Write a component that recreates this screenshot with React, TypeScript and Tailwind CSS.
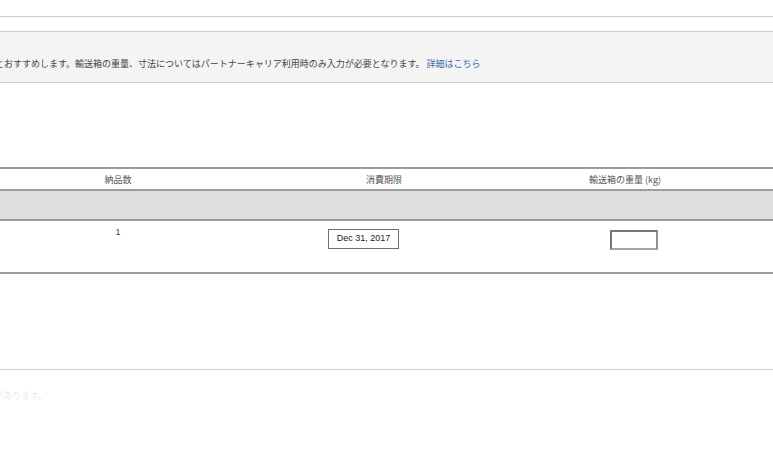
const JP = { fontFamily: '"Noto Sans CJK JP", "Noto Sans", sans-serif' }

// 列幅: 左端は画面外に切れているので、見えている範囲の幅だけ再現する
const COLS = ['w-[236px]', 'w-[296px]', 'w-[186px]']

export default function App() {
  return (
    <div className="h-[457px] w-[773px] overflow-hidden bg-white text-[9px] text-[#444]" style={JP}>
      <div className="h-[16px]" />
      <div className="border-t border-[#cccccc]" />
      <div className="h-[14px]" />

      {/* お知らせパネル */}
      <div className="h-[52px] border-y border-[#c3ced8] bg-[#f4f4f4] pt-[25px] leading-[13px]">
        <p className="ml-[-5px] whitespace-nowrap">
          とおすすめします。輸送箱の重量、寸法についてはパートナーキャリア利用時のみ入力が必要となります。{' '}
          <a className="text-[#3f6ea8]">詳細はこちら</a>
        </p>
      </div>

      <div className="h-[84px]" />

      {/* 納品テーブル */}
      <div className="border-y-2 border-[#9d9d9d]">
        <div className="flex h-[20px] items-center leading-[13px] text-[#555]">
          <div className={`${COLS[0]} text-center`}>納品数</div>
          <div className={`${COLS[1]} text-center`}>消費期限</div>
          <div className={`${COLS[2]} text-center`}>
            輸送箱の重量 (kg)
          </div>
        </div>
      </div>
      <div className="h-[28px] bg-[#dedede]" />
      <div className="flex h-[55px] border-y-2 border-[#9d9d9d]">
        <div className={`${COLS[0]} pt-[5px] text-center leading-[13px] text-[#444]`} style={{ fontFamily: '"Liberation Sans", Arial, sans-serif' }}>
          1
        </div>
        <div className={`${COLS[1]} pl-[92px] pt-[8px]`}>
          <div
            className="flex h-[20px] w-[71px] items-center justify-center border border-[#6f6f6f] text-[9px] text-[#222]"
            style={{ fontFamily: '"Liberation Sans", Arial, sans-serif' }}
          >
            Dec 31, 2017
          </div>
        </div>
        <div className={`${COLS[2]} pl-[78px] pt-[9px]`}>
          <div className="h-[20px] w-[48px] border-2 border-[#767676] border-b-[#a5a5a5] border-r-[#8f8f8f] bg-white" />
        </div>
      </div>

      <div className="h-[95px]" />
      <div className="border-t border-[#cfcfcf]" />
      <p className="ml-[-6px] mt-[19px] whitespace-nowrap leading-[13px] text-[#ececec]">
        があります。
      </p>
    </div>
  )
}
